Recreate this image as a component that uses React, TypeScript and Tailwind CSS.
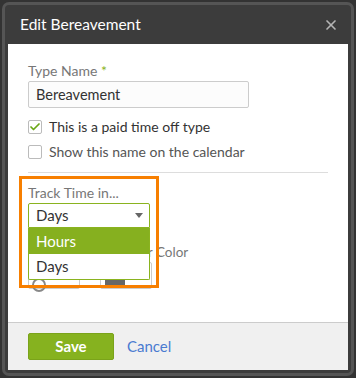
import { Check, X } from 'lucide-react';

const font = { fontFamily: 'Lato, "Noto Sans", sans-serif' };

export default function App() {
  return (
    <div className="w-[356px] h-[378px] bg-[#333333] p-[2px]" style={font}>
      <div className="h-full rounded-[7px] bg-[#555555] p-[3px]">
        <div className="flex h-full flex-col rounded-[4px] bg-[#3c3c3c] px-[3px] pb-[3px]">
          {/* header */}
          <div className="flex h-[39px] shrink-0 items-center justify-between pl-[12px] pr-[9px]">
            <h1 className="text-[15.5px] text-white">Edit Bereavement</h1>
            <X className="h-[16px] w-[16px] text-[#b5b5b5]" strokeWidth={2.5} />
          </div>

          {/* body */}
          <div className="relative flex-1 bg-white px-[20px] pt-[17px]">
            <label className="block text-[14px] leading-[19px] text-[#777]">
              Type Name <span className="text-[#8ab31f]">*</span>
            </label>
            <div className="mt-[1px] flex h-[27px] w-[221px] items-center rounded-[2px] border border-[#cccccc] bg-[#fcfcfc] px-[7px] text-[14.5px] text-[#333]">
              Bereavement
            </div>

            <div className="mt-[9px] flex items-center gap-[7px] text-[14px] leading-[20px] text-[#333]">
              <span className="flex h-[14px] w-[14px] items-center justify-center rounded-[2px] border border-[#bbbbbb] bg-white">
                <Check className="h-[12px] w-[12px] text-[#6aa716]" strokeWidth={3.5} />
              </span>
              This is a paid time off type
            </div>
            <div className="mt-[5px] flex items-center gap-[7px] text-[14px] leading-[20px] text-[#555]">
              <span className="h-[14px] w-[14px] rounded-[2px] border border-[#bbbbbb] bg-white" />
              Show this name on the calendar
            </div>

            <div className="mt-[10px] h-px w-[300px] bg-[#dddddd]" />

            {/* track time section */}
            <div className="relative mt-[10px]">
              <label className="block text-[14px] leading-[19px] text-[#777]">Track Time in...</label>
              <div className="mt-[1px] flex h-[25px] w-[122px] items-center justify-between rounded-t-[2px] border border-[#8ab31f] bg-white pl-[7px] pr-[6px] text-[15px] text-[#333]">
                Days
                <span className="h-0 w-0 border-x-[4px] border-t-[5px] border-x-transparent border-t-[#666]" />
              </div>

              <div className="mt-[15px] flex gap-[20px]">
                <div>
                  <div className="text-[13.5px] leading-[19px] text-[#777]">Icon</div>
                  <div className="flex h-[27px] w-[52px] items-end rounded-[2px] border border-[#cccccc] pl-[3px]">
                    <div className="mb-[-4px] h-[14px] w-[14px] rounded-full border-2 border-[#888]" />
                  </div>
                </div>
                <div>
                  <div className="text-[13.5px] leading-[19px] text-[#777]">Calendar Color</div>
                  <div className="flex h-[27px] w-[52px] items-center rounded-[2px] border border-[#cccccc] pl-[4px]">
                    <div className="h-[18px] w-[20px] bg-[#666]" />
                  </div>
                </div>
              </div>

              {/* open dropdown */}
              <div className="absolute left-0 top-[45px] w-[122px] rounded-b-[2px] border border-t-0 border-[#8ab31f] bg-white text-[15px]">
                <div className="flex h-[26px] items-center bg-[#86b01f] px-[7px] text-white">Hours</div>
                <div className="flex h-[25px] items-center px-[7px] text-[#333]">Days</div>
              </div>

              {/* highlight annotation */}
              <div className="absolute left-[-9px] top-[-7px] h-[112px] w-[140px] border-[3px] border-[#f77f00]" />
            </div>
          </div>

          {/* footer */}
          <div className="flex h-[48px] shrink-0 items-center gap-[13px] border-t border-[#cccccc] bg-[#f0f0f0] px-[20px]">
            <button className="h-[27px] w-[86px] rounded-[2px] border border-[#7aa31a] bg-[#86b21f] text-[15px] font-bold text-white">
              Save
            </button>
            <span className="text-[15px] text-[#4a7bd0]">Cancel</span>
          </div>
        </div>
      </div>
    </div>
  );
}
